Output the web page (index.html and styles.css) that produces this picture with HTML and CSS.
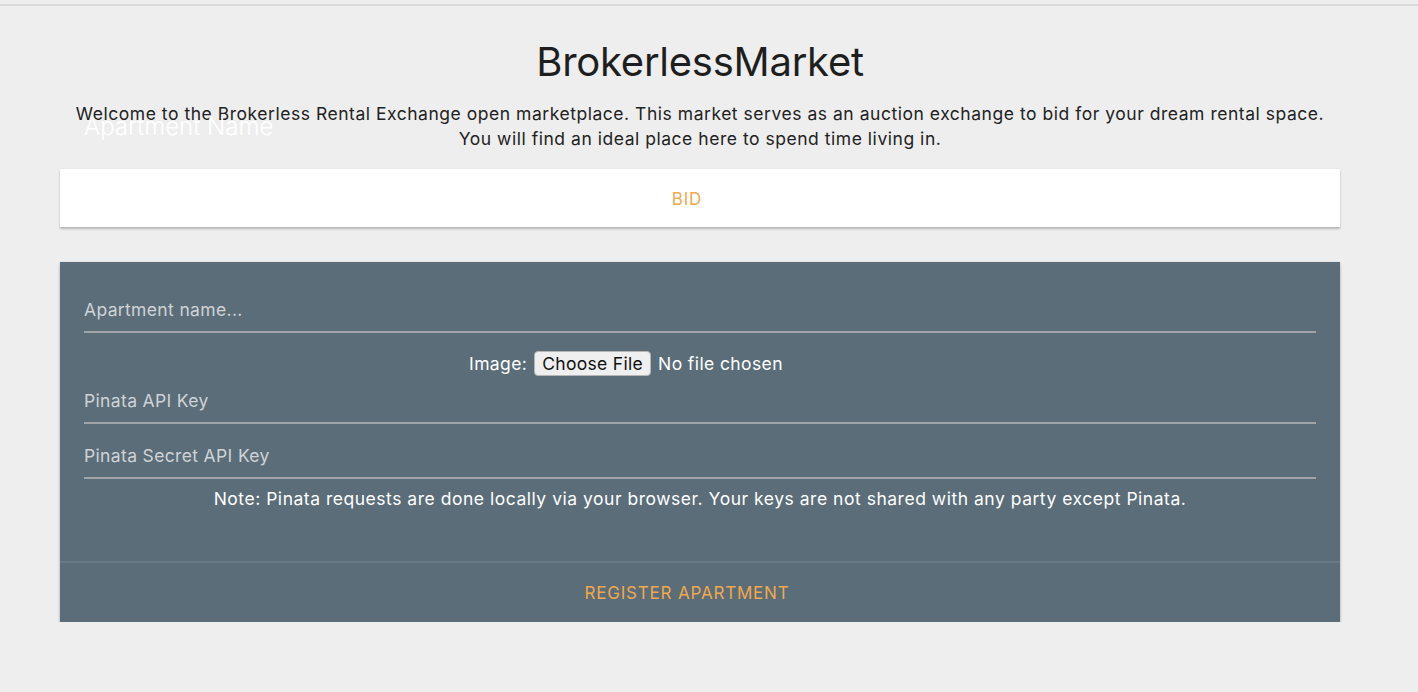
FILE: index.html
```html
<!DOCTYPE html>
<html lang="en">
<head>
<meta charset="utf-8">
<title>BrokerlessMarket</title>
<link rel="stylesheet" href="styles.css">
</head>
<body>
<div class="topline"></div>
<main class="page">
  <header class="intro">
    <h1 class="title">BrokerlessMarket</h1>
    <p class="welcome">Welcome to the Brokerless Rental Exchange open marketplace. This market serves as an auction exchange to bid for your dream rental space.<br>You will find an ideal place here to spend time living in.</p>
    <span class="float-label">Apartment Name</span>
  </header>
  <section class="bid-card">
    <span class="action">BID</span>
  </section>
  <section class="form-card">
    <div class="form-body">
      <div class="field"><span class="placeholder">Apartment name...</span></div>
      <div class="file-row">
        <span class="file-label">Image:</span>
        <span class="file-btn">Choose File</span>
        <span class="file-status">No file chosen</span>
      </div>
      <div class="field"><span class="placeholder">Pinata API Key</span></div>
      <div class="field field-gap"><span class="placeholder">Pinata Secret API Key</span></div>
      <p class="note">Note: Pinata requests are done locally via your browser. Your keys are not shared with any party except Pinata.</p>
    </div>
    <div class="form-footer">
      <span class="action">REGISTER APARTMENT</span>
    </div>
  </section>
</main>
</body>
</html>
```

FILE: styles.css
```css
html, body {
  margin: 0;
  padding: 0;
  background: #eeeeee;
  font-family: Inter, "Noto Sans", "Liberation Sans", sans-serif;
  color: #222222;
}

.topline {
  height: 4px;
  border-bottom: 2px solid #dadada;
  background: #eeeeee;
}

.page {
  width: 1280px;
  margin-left: 60px;
}

.intro {
  position: relative;
  text-align: center;
  padding-top: 32px;
}

.title {
  margin: 0;
  font-size: 40px;
  line-height: 48px;
  font-weight: 400;
  color: #1e1e1e;
  letter-spacing: -0.25px;
}

.welcome {
  margin: 15px 0 0;
  font-size: 17.5px;
  line-height: 25px;
  letter-spacing: 0.53px;
  color: #222222;
}

.float-label {
  position: absolute;
  left: 24px;
  top: 106px;
  font-size: 24px;
  line-height: 30px;
  color: #ffffff;
  font-weight: 300;
}

.bid-card {
  margin-top: 18px;
  height: 58px;
  background: #ffffff;
  display: flex;
  align-items: center;
  justify-content: center;
  padding-top: 2px;
  box-sizing: border-box;
  padding-right: 26px;
  box-shadow: 0 2px 2px rgba(0,0,0,0.22), 0 0 1px rgba(0,0,0,0.12);
}

.action {
  color: #f2a84c;
  font-size: 17px;
  letter-spacing: 0.8px;
}

.form-card {
  margin-top: 35px;
  background: #5a6d79;
  box-shadow: 0 2px 3px rgba(0,0,0,0.25), 0 0 1px rgba(0,0,0,0.12);
}

.form-body {
  padding: 25px 24px 51px;
  border-bottom: 2px solid #677a85;
}

.field {
  height: 44px;
  border-bottom: 2px solid #a2a5a8;
  display: flex;
  align-items: center;
}

.field-gap {
  margin-top: 9px;
}

.placeholder {
  font-size: 17.5px;
  color: #d0d3d6;
  letter-spacing: 0.35px;
}

.file-row {
  margin-top: 15px;
  height: 30px;
  display: flex;
  align-items: center;
  justify-content: center;
  gap: 7px;
  padding-right: 148px;
  color: #ffffff;
  font-size: 17.5px;
  letter-spacing: 0.4px;
}

.file-btn {
  background: #efefef;
  color: #111111;
  border: 1px solid #b5b5b5;
  border-radius: 4px;
  padding: 1px 7px;
  line-height: 21px;
  font-size: 17.5px;
  letter-spacing: 0.3px;
}

.note {
  margin: 9px 0 0;
  text-align: center;
  color: #ffffff;
  font-size: 17.5px;
  line-height: 22px;
  letter-spacing: 0.52px;
}

.form-footer {
  height: 59px;
  display: flex;
  align-items: center;
  justify-content: center;
  padding-right: 26px;
}
```
